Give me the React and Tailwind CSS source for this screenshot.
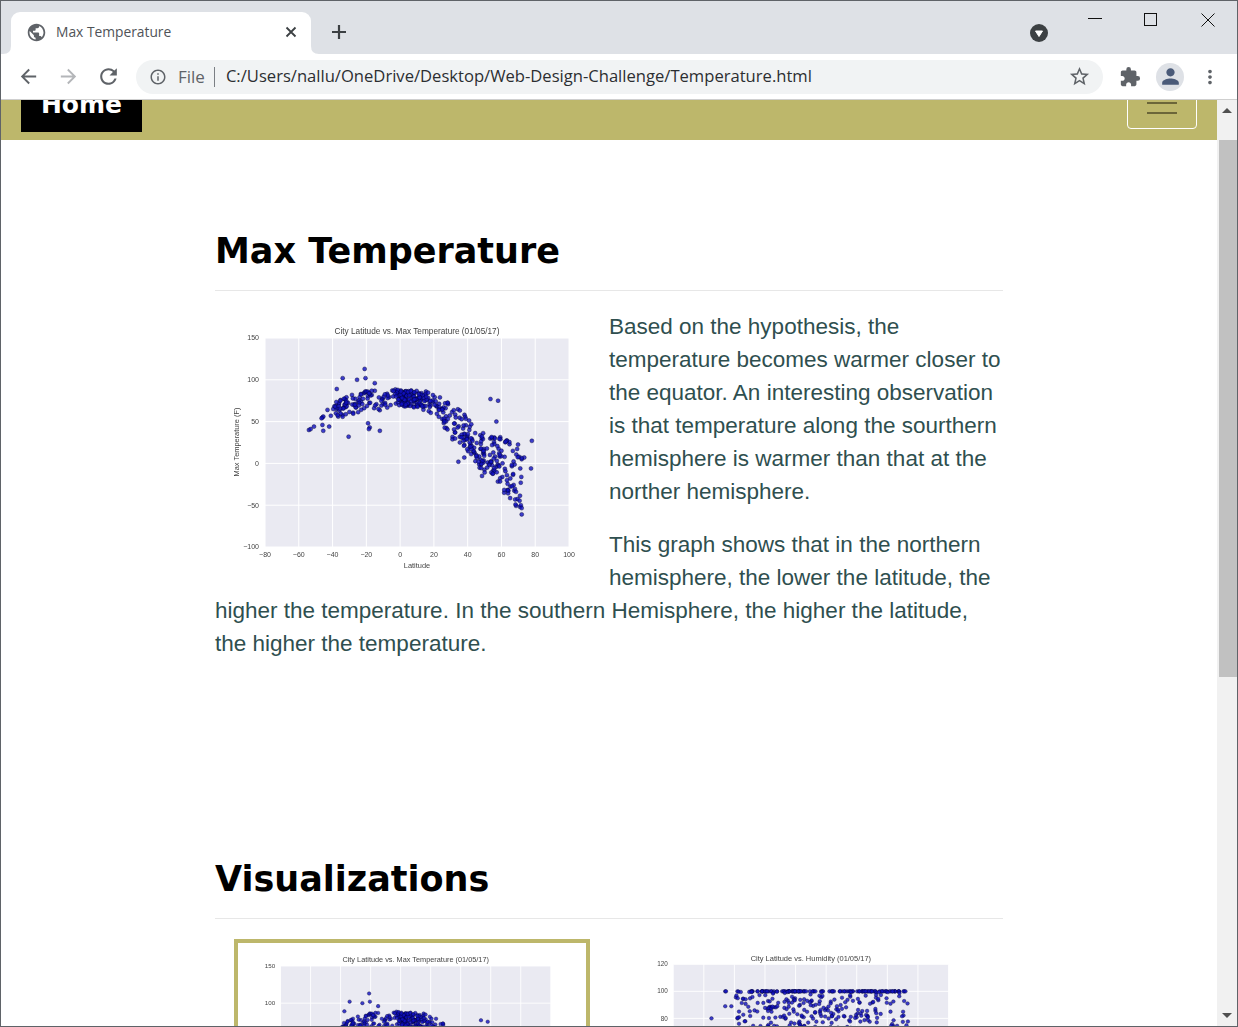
import {
  MdPublic,
  MdArrowBack,
  MdArrowForward,
  MdRefresh,
  MdInfoOutline,
  MdStarBorder,
  MdExtension,
  MdPerson,
  MdMoreVert,
} from "react-icons/md";

function rng(seed) {
  let a = seed;
  return () => {
    a = (a + 0x6d2b79f5) | 0;
    let t = Math.imul(a ^ (a >>> 15), 1 | a);
    t = (t + Math.imul(t ^ (t >>> 7), 61 | t)) ^ t;
    return ((t ^ (t >>> 14)) >>> 0) / 4294967296;
  };
}

// lat, low, high of the main cloud
const TEMP_BANDS = [
  [-40, 52, 72],
  [-30, 58, 82],
  [-20, 62, 87],
  [-10, 62, 89],
  [0, 68, 89],
  [10, 66, 87],
  [20, 58, 85],
  [25, 48, 78],
  [30, 28, 72],
  [35, 22, 64],
  [40, 14, 60],
  [45, 0, 38],
  [50, -14, 36],
  [55, -14, 33],
  [60, -30, 32],
  [65, -48, 29],
  [70, -52, 27],
  [73, -55, 8],
];

const TEMP_EXTRA = [
  [-54, 40], [-53, 41], [-51, 44], [-46, 55], [-45.5, 56], [-46.5, 54], [-46, 46], [-45.5, 39],
  [-42, 44], [-43, 64], [-41, 57], [-38, 60], [-38, 69], [-37.5, 89], [-34, 102], [-30.5, 32],
  [-25.5, 100], [-21, 113], [-20.5, 102], [-15, 96], [-19, 48], [-18, 43], [-18.5, 41], [-12, 39],
  [34.5, 2], [38, 7], [53.5, 77], [58, 75], [57, 50], [78, 27], [77.5, -6], [72, -61], [48.5, -15],
  [73.5, 7], [72, 5], [71, -52], [71.5, -50],
];

function tempData() {
  const r = rng(17);
  const pts = [...TEMP_EXTRA];
  for (let i = 0; i < 470; i++) {
    const lat = r() < 0.72 ? -2 + r() * 74 : -40 + r() * 45;
    let j = 0;
    while (j < TEMP_BANDS.length - 2 && TEMP_BANDS[j + 1][0] < lat) j++;
    const [a, lo1, hi1] = TEMP_BANDS[j];
    const [b, lo2, hi2] = TEMP_BANDS[j + 1];
    const k = (lat - a) / (b - a);
    const lo = lo1 + (lo2 - lo1) * k;
    const hi = hi1 + (hi2 - hi1) * k;
    pts.push([lat, lo + (hi - lo) * r()]);
  }
  return pts;
}

function humidityData() {
  const r = rng(5);
  const pts = [
    [-55, 80], [-46, 100], [-45.5, 100], [-46, 89], [-42, 89], [-38, 100], [-37, 85],
    [-38, 80], [-37, 76],
  ];
  for (let i = 0; i < 110; i++) pts.push([-30 + r() * 102, 100]);
  for (let i = 0; i < 260; i++) {
    const lat = r() < 0.15 ? -40 + r() * 20 : -20 + r() * 94;
    pts.push([lat, 70 + r() * 30]);
  }
  return pts;
}

const xTicks = [-80, -60, -40, -20, 0, 20, 40, 60, 80, 100];

function Chart({ title, yLabel, data, yMin, yMax, yStep, width }) {
  const left = 40;
  const right = 344;
  const top = 18;
  const bottom = 227;
  const px = (v) => left + ((v + 80) / 180) * (right - left);
  const py = (v) => top + ((yMax - v) / (yMax - yMin)) * (bottom - top);
  const yTicks = [];
  for (let v = yMin; v <= yMax; v += yStep) yTicks.push(v);

  return (
    <svg
      viewBox="0 0 360 255"
      width={width}
      height={(width * 255) / 360}
      className="block blur-[0.35px] shrink-0"
      fontFamily="'Liberation Sans', sans-serif"
    >
      <rect x={left} y={top} width={right - left} height={bottom - top} fill="#eaeaf2" />
      {xTicks.map((t) => (
        <line key={t} x1={px(t)} x2={px(t)} y1={top} y2={bottom} stroke="#fff" strokeWidth="1" />
      ))}
      {yTicks.map((t) => (
        <line key={t} x1={left} x2={right} y1={py(t)} y2={py(t)} stroke="#fff" strokeWidth="1" />
      ))}
      {data.map(([x, y], i) => (
        <circle
          key={i}
          cx={px(x)}
          cy={py(y)}
          r="2"
          fill="#1010c0"
          fillOpacity="0.8"
          stroke="#00002a"
          strokeOpacity="0.8"
          strokeWidth="0.5"
        />
      ))}
      <text x={192} y={14} textAnchor="middle" fontSize="8.25" fill="#444">
        {title}
      </text>
      {yTicks.map((t) => (
        <text key={t} x={34} y={py(t) + 2.4} textAnchor="end" fontSize="7" fill="#444">
          {t < 0 ? `\u2212${-t}` : t}
        </text>
      ))}
      {xTicks.map((t) => (
        <text key={t} x={px(t)} y={237} textAnchor="middle" fontSize="7" fill="#444">
          {t < 0 ? `\u2212${-t}` : t}
        </text>
      ))}
      <text x={192} y={248} textAnchor="middle" fontSize="7.4" fill="#444">
        Latitude
      </text>
      <text
        x={14}
        y={122}
        textAnchor="middle"
        fontSize="7.4"
        fill="#444"
        transform="rotate(-90 14 122)"
      >
        {yLabel}
      </text>
    </svg>
  );
}

function TabStrip() {
  return (
    <div className="flex h-[53px] shrink-0 bg-[#dee1e6] pl-[10px]">
      <div className="relative mt-[11px] flex h-[42px] w-[300px] items-center rounded-t-[9px] bg-white pl-[15px] pr-[14px] text-[#5f6368]">
        <svg className="absolute bottom-0 left-[-8px]" width="8" height="8">
          <path d="M0 8Q8 8 8 0V8Z" fill="#fff" />
        </svg>
        <svg className="absolute bottom-0 right-[-8px]" width="8" height="8">
          <path d="M8 8Q0 8 0 0V8Z" fill="#fff" />
        </svg>
        <MdPublic size={21} className="mb-[2px] shrink-0" />
        <span className="mb-[2px] ml-[9px] flex-1 font-['Open_Sans'] text-[13.8px] text-[#4f5358]">
          Max Temperature
        </span>
        <svg className="mb-[2px]" width="12" height="12" viewBox="0 0 12 12" stroke="#3c4043" strokeWidth="1.8">
          <path d="M1.5 1.5l9 9M10.5 1.5l-9 9" />
        </svg>
      </div>
      <svg className="ml-[20px] mt-[23px]" width="16" height="16" viewBox="0 0 16 16" stroke="#3c4043" strokeWidth="2.2">
        <path d="M8 1v14M1 8h14" />
      </svg>
      <div className="flex-1" />
      <svg className="mt-[23px] mr-[189px]" width="18" height="18" viewBox="0 0 18 18">
        <circle cx="9" cy="9" r="9" fill="#3c4043" />
        <path d="M5.5 7h7L9 12.5Z" fill="#fff" stroke="#fff" strokeLinejoin="round" />
      </svg>
      <div className="absolute right-[1px] top-0 flex">
        <svg className="mr-[42px] mt-[17px]" width="14" height="2">
          <rect width="14" height="1" fill="#111" />
        </svg>
        <svg className="mr-[44px] mt-[12px]" width="13" height="13">
          <rect x="0.5" y="0.5" width="12" height="12" fill="none" stroke="#111" />
        </svg>
        <svg className="mr-[21px] mt-[12px]" width="14" height="14" stroke="#111">
          <path d="M0.5 0.5l13 13M13.5 0.5l-13 13" />
        </svg>
      </div>
    </div>
  );
}

function Toolbar() {
  return (
    <div className="flex h-[46px] shrink-0 items-center border-b border-[#cfcfcf] bg-white pl-[16px] pr-[16px] text-[#5f6368]">
      <MdArrowBack size={23} />
      <MdArrowForward size={23} className="ml-[17px] text-[#b4b6b9]" />
      <MdRefresh size={25} className="ml-[16px]" />
      <div className="ml-[15px] flex h-[34px] w-[967px] items-center rounded-full bg-[#f1f3f4] pl-[13px] pr-[12px]">
        <MdInfoOutline size={18} />
        <span className="ml-[11px] font-['Open_Sans'] text-[17px] text-[#5f6368]">File</span>
        <span className="ml-[9px] h-[20px] w-px bg-[#7b7f84]" />
        <span className="ml-[11px] flex-1 font-['Open_Sans'] text-[16.6px] text-[#2c2e31]">
          C:/Users/nallu/OneDrive/Desktop/Web-Design-Challenge/Temperature.html
        </span>
        <MdStarBorder size={23} />
      </div>
      <MdExtension size={22} className="ml-[16px]" />
      <div className="ml-[15px] flex h-[28px] w-[28px] items-center justify-center rounded-full bg-[#dee1e6]">
        <MdPerson size={25} className="text-[#4a5a78]" />
      </div>
      <MdMoreVert size={22} className="ml-[15px]" />
    </div>
  );
}

function Scrollbar() {
  return (
    <div className="flex w-[20px] shrink-0 flex-col bg-[#f1f1f1] pl-[2px]">
      <div className="flex h-[40px] shrink-0 justify-center pt-[8px] pr-[2px]">
        <div className="h-0 w-0 border-x-[5px] border-b-[5px] border-x-transparent border-b-[#505050]" />
      </div>
      <div className="h-[537px] shrink-0 bg-[#c1c1c1]" />
      <div className="flex-1" />
      <div className="flex h-[16px] shrink-0 justify-center pt-[3px] pr-[2px]">
        <div className="h-0 w-0 border-x-[5px] border-t-[5px] border-x-transparent border-t-[#505050]" />
      </div>
    </div>
  );
}

export default function App() {
  const temps = tempData();
  const humidity = humidityData();

  return (
    <div className="relative flex h-[1027px] w-[1238px] flex-col overflow-hidden border border-[#5f6368] bg-white">
      <TabStrip />
      <Toolbar />
      <div className="flex min-h-0 flex-1">
        <main className="min-w-0 flex-1 overflow-hidden">
          <nav className="mt-[-20px] flex h-[60px] items-start justify-between bg-[#bdb76b] pl-[20px] pr-[20px]">
            <a className="flex h-[52px] w-[121px] items-center justify-center bg-black pb-[2px] font-['DejaVu_Sans'] text-[25px] font-bold text-white">
              Home
            </a>
            <div className="mt-[8px] flex h-[41px] w-[70px] flex-col items-center justify-end gap-[8px] rounded-[4px] border border-white pb-[14px]">
              <span className="h-[2px] w-[30px] bg-[#6b6639]" />
              <span className="h-[2px] w-[30px] bg-[#6b6639]" />
            </div>
          </nav>

          <section className="mx-auto w-[788px]">
            <h1 className="mt-[89px] font-['DejaVu_Sans'] text-[35px] font-bold leading-[44px] text-black">
              Max Temperature
            </h1>
            <hr className="mt-[17px] border-[#e7e7e7]" />
            <div className="mt-[19px] font-['Liberation_Sans'] text-[22.5px] leading-[33px] text-[#2f4f4f]">
              <div className="float-left h-[280px] w-[394px] pl-[10px] pt-[10px]">
                <Chart
                  title="City Latitude vs. Max Temperature (01/05/17)"
                  yLabel="Max Temperature (F)"
                  data={temps}
                  yMin={-100}
                  yMax={150}
                  yStep={50}
                  width={360}
                />
              </div>
              <p>
                Based on the hypothesis, the temperature becomes warmer closer to the equator. An
                interesting observation is that temperature along the sourthern hemisphere is warmer
                than that at the norther hemisphere.
              </p>
              <p className="mt-[20px]">
                This graph shows that in the northern hemisphere, the lower the latitude, the higher
                the temperature. In the southern Hemisphere, the higher the latitude, the higher the
                temperature.
              </p>
            </div>

            <h2 className="mt-[197px] font-['DejaVu_Sans'] text-[35px] font-bold leading-[44px] text-black">
              Visualizations
            </h2>
            <hr className="mt-[17px] border-[#e7e7e7]" />
            <div className="mt-[20px] grid grid-cols-2">
              <div className="flex justify-center">
                <div className="flex h-[300px] w-[356px] justify-start overflow-hidden border-4 border-[#bdb76b] pl-[7px] pt-[7px]">
                  <Chart
                    title="City Latitude vs. Max Temperature (01/05/17)"
                    yLabel="Max Temperature (F)"
                    data={temps}
                    yMin={-100}
                    yMax={150}
                    yStep={50}
                    width={320}
                  />
                </div>
              </div>
              <div className="flex justify-center">
                <div className="flex h-[300px] w-[356px] justify-start overflow-hidden pl-[9px] pt-[9px]">
                  <Chart
                    title="City Latitude vs. Humidity (01/05/17)"
                    yLabel="Humidity (%)"
                    data={humidity}
                    yMin={-20}
                    yMax={120}
                    yStep={20}
                    width={326}
                  />
                </div>
              </div>
            </div>
          </section>
        </main>
        <Scrollbar />
      </div>
    </div>
  );
}
